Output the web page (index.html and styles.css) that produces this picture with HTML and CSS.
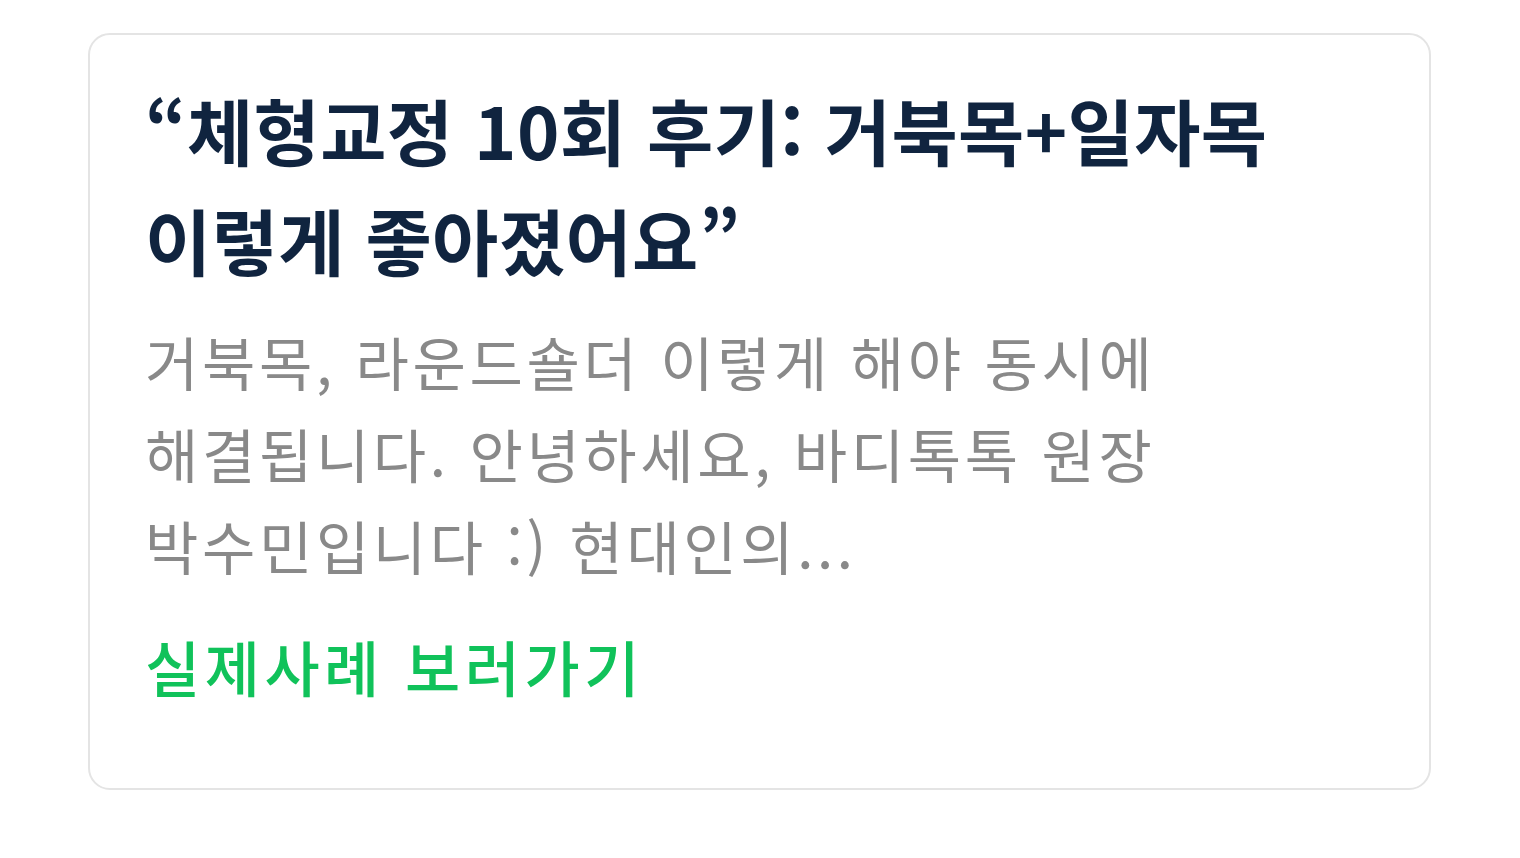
FILE: index.html
```html
<!DOCTYPE html>
<html lang="ko">
<head>
<meta charset="utf-8">
<title>체형교정 후기</title>
<link rel="stylesheet" href="styles.css">
</head>
<body>
<main class="page">
  <article class="card">
    <h2 class="card-title">“체형교정 10회 후기: 거북목+일자목 이렇게 좋아졌어요”</h2>
    <p class="card-desc">거북목, 라운드숄더 이렇게 해야 동시에 해결됩니다. 안녕하세요, 바디톡톡 원장 박수민입니다 :) 현대인의...</p>
    <a class="card-link" href="#">실제사례 보러가기</a>
  </article>
</main>
</body>
</html>
```
FILE: styles.css
```css
* { box-sizing: border-box; }
html, body { margin: 0; padding: 0; background: #ffffff; }
body {
  font-family: "Noto Sans CJK KR", "Noto Sans", sans-serif;
  width: 1520px;
  height: 858px;
  overflow: hidden;
}
.page {
  padding: 33px 89px 0 88px;
}
.card {
  width: 1343px;
  height: 757px;
  border: 2px solid #e4e4e4;
  border-radius: 22px;
  padding: 39px 57px 0 55px;
  display: flex;
  flex-direction: column;
  align-items: flex-start;
  word-break: keep-all;
}
.card-title {
  margin: 0;
  font-size: 72px;
  line-height: 110px;
  font-weight: 700;
  color: #10243f;
  letter-spacing: 0.4px;
  max-width: 1226px;
}
.card-desc {
  margin: 21px 0 0 0;
  font-size: 58px;
  line-height: 92px;
  font-weight: 400;
  color: #898989;
  letter-spacing: 3.6px;
  max-width: 1228px;
}
.card-link {
  margin-top: 30px;
  font-size: 60px;
  line-height: 90px;
  font-weight: 500;
  color: #10c25a;
  letter-spacing: 4.5px;
  text-decoration: none;
}
```
